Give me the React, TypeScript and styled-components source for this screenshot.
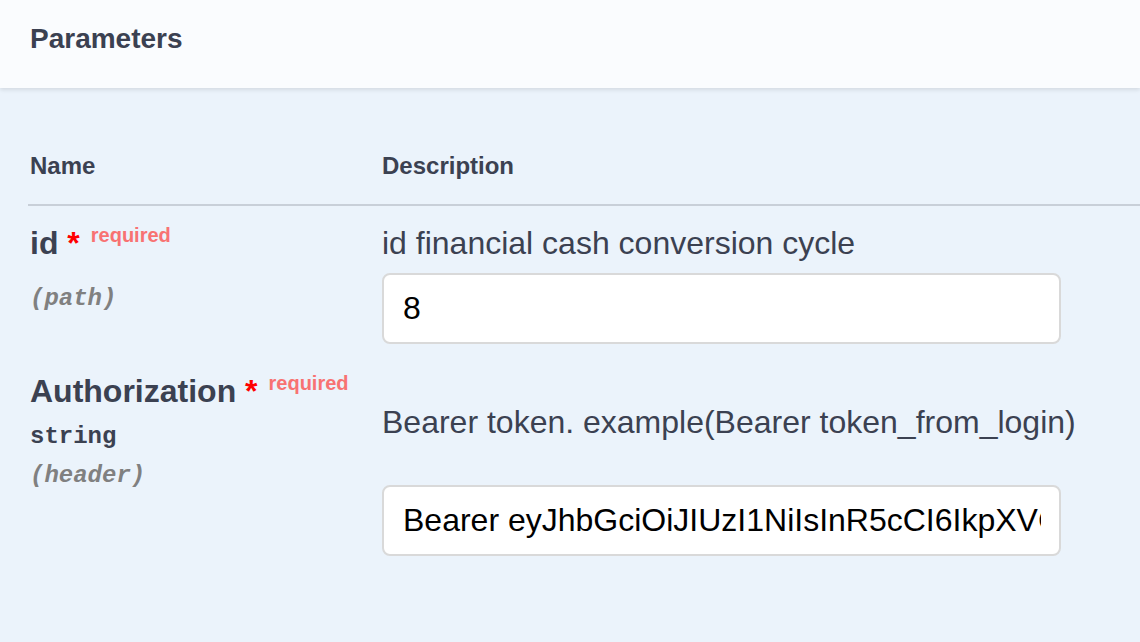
import React from "react";
import styled, { createGlobalStyle } from "styled-components";

const Global = createGlobalStyle`
  html, body {
    margin: 0;
    padding: 0;
    background: #ebf3fb;
  }
  body {
    font-family: "Liberation Sans", Helvetica, Arial, sans-serif;
    color: #3b4151;
    overflow: hidden;
  }
`;

const Page = styled.div`
  width: 1140px;
  height: 642px;
  background: #ebf3fb;
  overflow: hidden;
`;

const SectionHeader = styled.div`
  box-sizing: border-box;
  height: 88px;
  padding: 25px 30px 0;
  background: #fafcfe;
  box-shadow: 0 2px 4px rgba(0, 0, 0, 0.1);
  position: relative;
  z-index: 1;
`;

const Title = styled.h4`
  margin: 0;
  font-size: 28px;
  line-height: 28px;
  font-weight: 700;
  color: #3b4151;
`;

const Table = styled.div`
  margin-left: 30px;
`;

const HeadRow = styled.div`
  display: grid;
  grid-template-columns: 352px 1fr;
  padding: 66px 0 26px;
  margin-left: -2px;
  padding-left: 2px;
  border-bottom: 2px solid rgba(59, 65, 81, 0.2);
`;

const HeadCell = styled.div`
  font-size: 24px;
  line-height: 24px;
  font-weight: 700;
  color: #3b4151;
`;

const Row = styled.div`
  display: grid;
  grid-template-columns: 352px 1fr;
  padding: 17px 0 10px;
`;

const NameCol = styled.div`
  display: flex;
  flex-direction: column;
`;

const ParamName = styled.div`
  font-size: 32px;
  line-height: 40px;
  font-weight: 700;
  color: #3b4151;
  white-space: nowrap;
`;

const Star = styled.span`
  color: red;
`;

const Required = styled.span`
  font-size: 20px;
  line-height: 1;
  font-weight: 700;
  color: #f87272;
  padding: 0 5px 0 11px;
  vertical-align: 12px;
`;

const ParamType = styled.div<{ $top: number }>`
  margin-top: ${(p) => p.$top}px;
  font-family: "Liberation Mono", "Courier New", monospace;
  font-size: 24px;
  line-height: 24px;
  font-weight: 700;
  color: #3b4151;
`;

const ParamIn = styled.div<{ $top: number }>`
  margin-top: ${(p) => p.$top}px;
  font-family: "Liberation Mono", "Courier New", monospace;
  font-size: 24px;
  line-height: 24px;
  font-weight: 700;
  font-style: italic;
  color: #808080;
`;

const DescCol = styled.div`
  display: flex;
  flex-direction: column;
  align-items: flex-start;
`;

const DescText = styled.div<{ $top: number }>`
  margin-top: ${(p) => p.$top}px;
  font-size: 32px;
  line-height: 40px;
  color: #3b4151;
  white-space: nowrap;
`;

const TextInput = styled.input<{ $top: number }>`
  margin: ${(p) => p.$top}px 0 0;
  box-sizing: border-box;
  width: 679px;
  height: 71px;
  padding: 0 18px 0 19px;
  border: 2px solid #d9d9d9;
  border-radius: 8px;
  background: #fff;
  font-family: "Liberation Sans", Helvetica, Arial, sans-serif;
  font-size: 32px;
  color: #000;
  outline: none;
`;

const TOKEN =
  "Bearer eyJhbGciOiJIUzI1NiIsInR5cCI6IkpXVCJ9.eyJzdWIiOiIxMjM0NTY3ODkwIiwibmFtZSI6IkpvaG4gRG9lIiwiaWF0IjoxNTE2MjM5MDIyfQ";

export default function App() {
  return (
    <Page>
      <Global />
      <SectionHeader>
        <Title>Parameters</Title>
      </SectionHeader>
      <Table>
        <HeadRow>
          <HeadCell>Name</HeadCell>
          <HeadCell>Description</HeadCell>
        </HeadRow>
        <Row>
          <NameCol>
            <ParamName>
              id<Star>&nbsp;*</Star>
              <Required>required</Required>
            </ParamName>
            <ParamIn $top={24}>(path)</ParamIn>
          </NameCol>
          <DescCol>
            <DescText $top={0}>id financial cash conversion cycle</DescText>
            <TextInput $top={10} defaultValue="8" />
          </DescCol>
        </Row>
        <Row>
          <NameCol>
            <ParamName>
              Authorization<Star>&nbsp;*</Star>
              <Required>required</Required>
            </ParamName>
            <ParamType $top={14}>string</ParamType>
            <ParamIn $top={15}>(header)</ParamIn>
          </NameCol>
          <DescCol>
            <DescText $top={31}>
              Bearer token. example(Bearer token_from_login)
            </DescText>
            <TextInput $top={43} defaultValue={TOKEN} />
          </DescCol>
        </Row>
      </Table>
    </Page>
  );
}
